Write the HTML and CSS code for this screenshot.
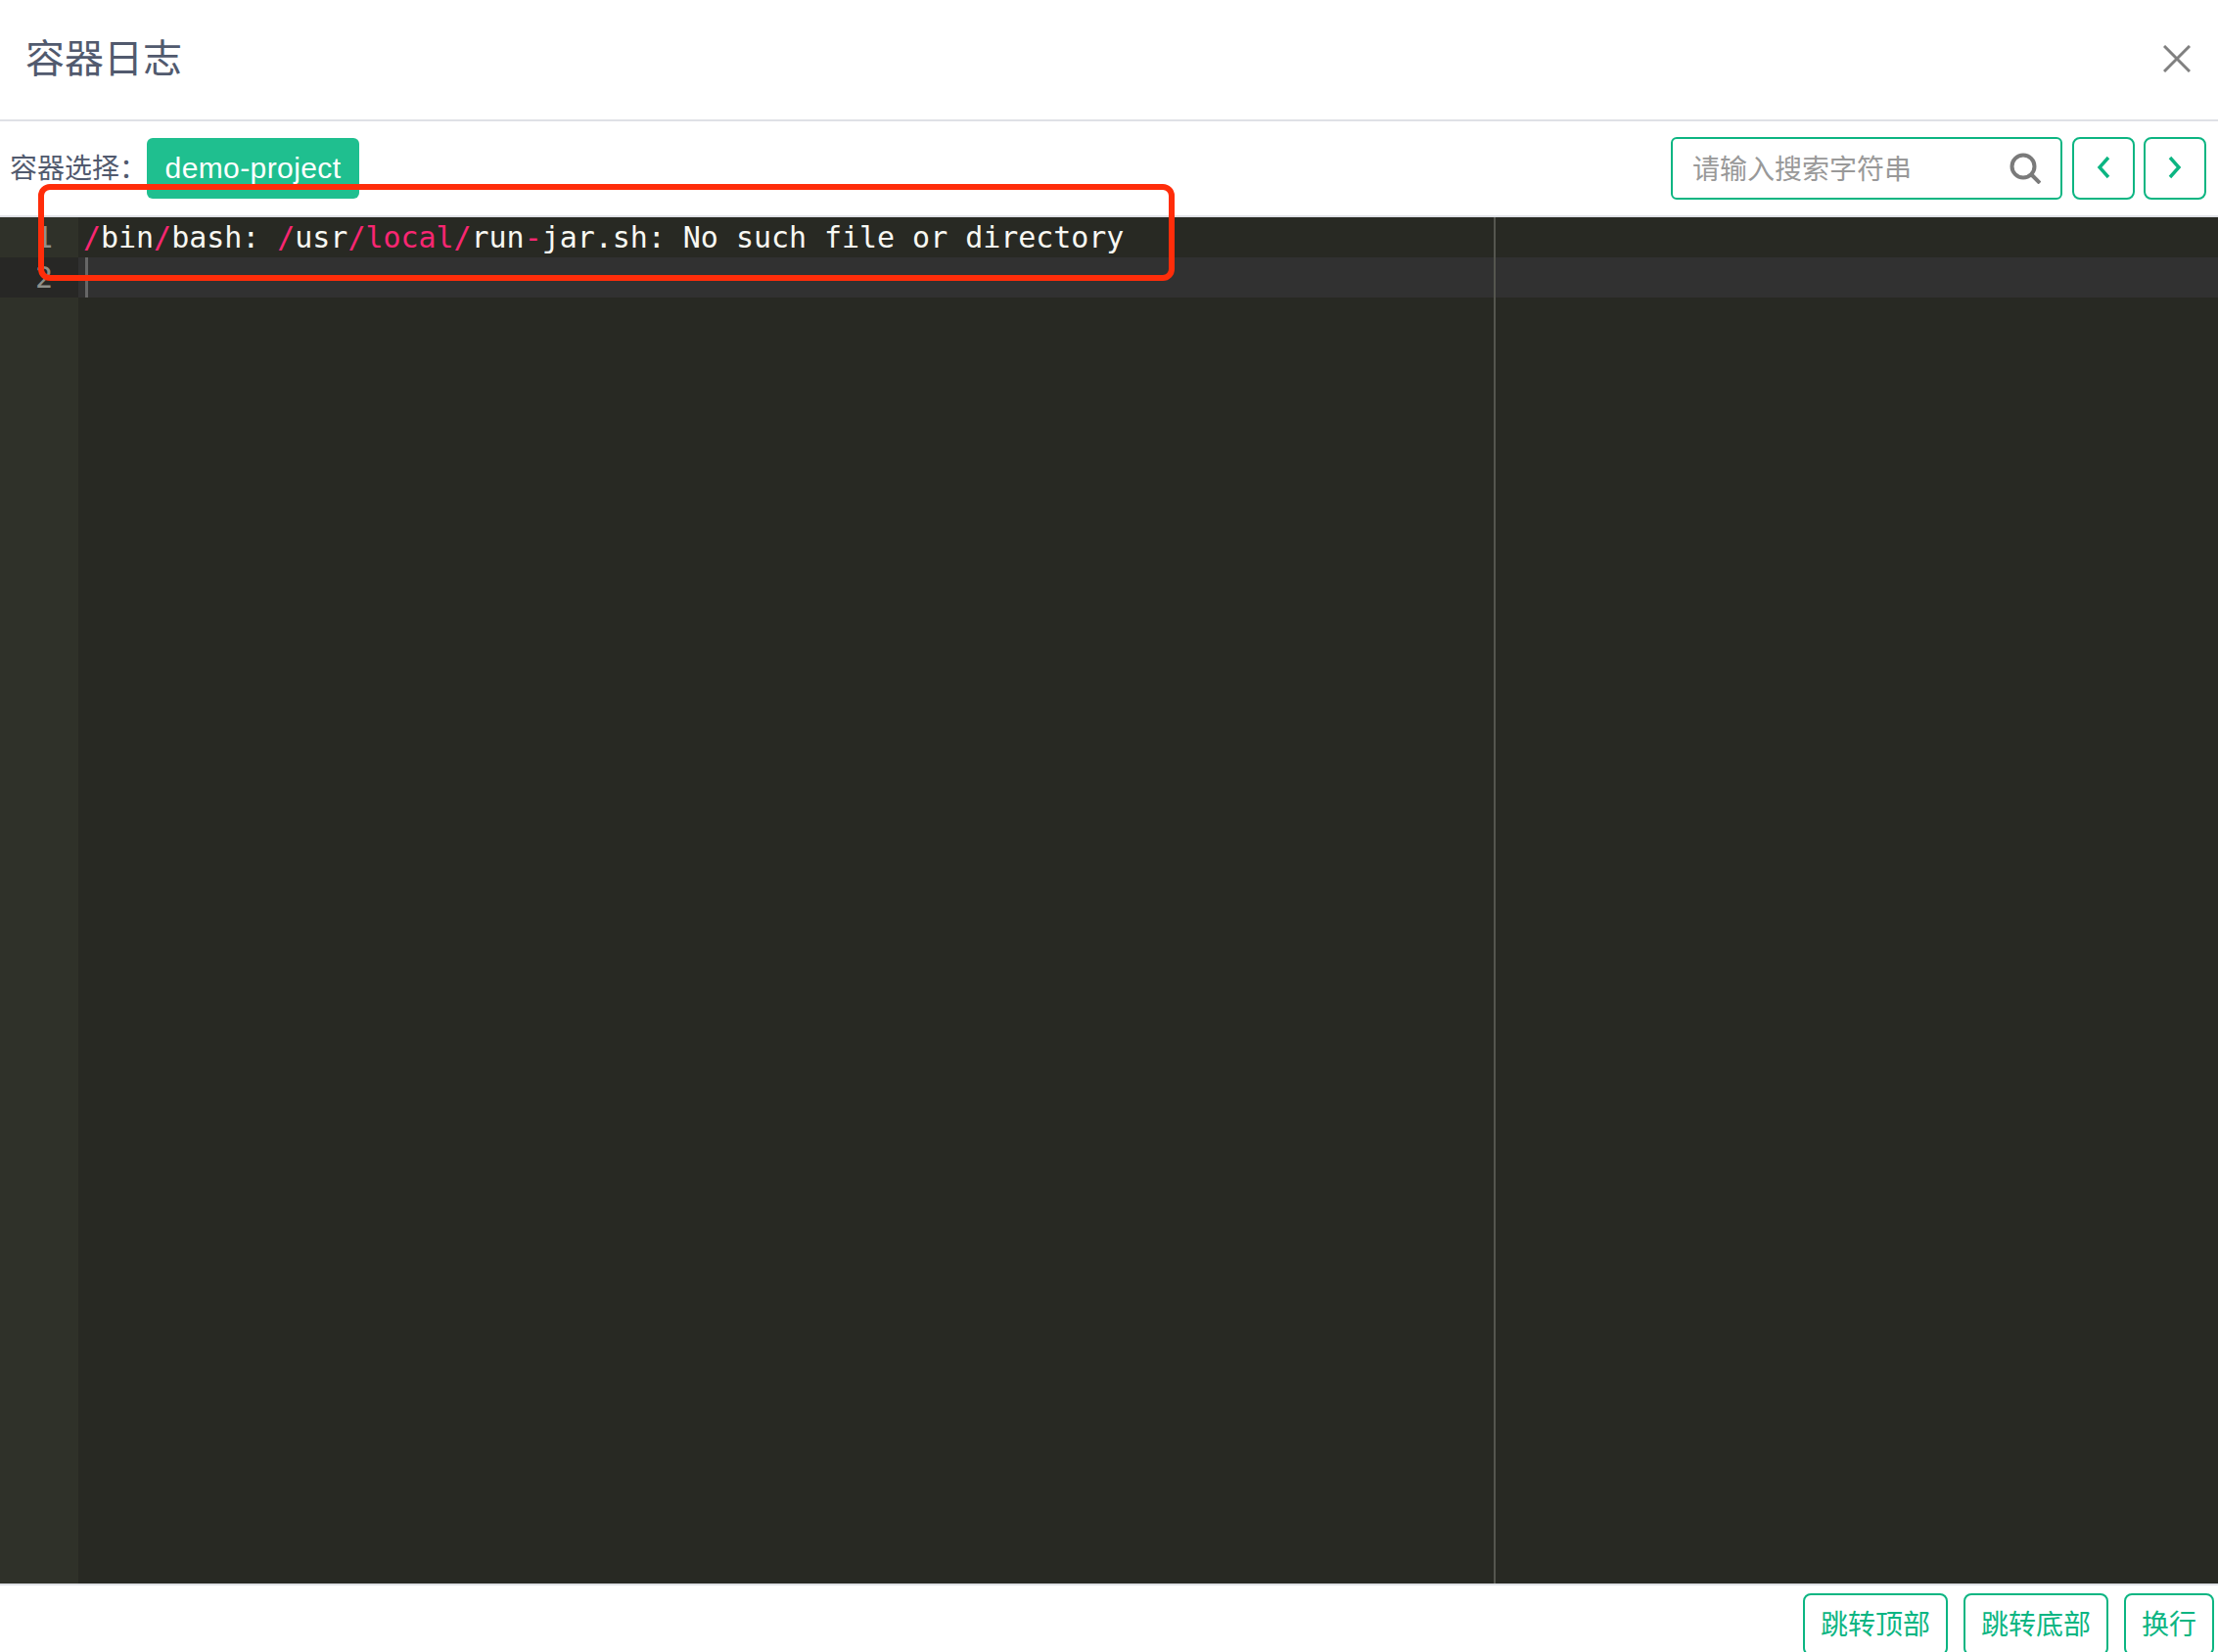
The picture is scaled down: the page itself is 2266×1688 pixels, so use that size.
FILE: index.html
```html
<!DOCTYPE html>
<html lang="zh">
<head>
<meta charset="utf-8">
<title>容器日志</title>
<link rel="stylesheet" href="styles.css">
</head>
<body>
<div class="modal">
  <header class="head">
    <h1 class="title">容器日志</h1>
    <svg class="close" width="28" height="28" viewBox="0 0 28 28"><path d="M1 1L27 27M27 1L1 27" fill="none" stroke="#808080" stroke-width="3"/></svg>
  </header>
  <div class="toolbar">
    <span class="label">容器选择：</span>
    <span class="tag">demo-project</span>
    <div class="tools">
      <div class="search">
        <span class="placeholder">请输入搜索字符串</span>
        <svg width="32" height="32" viewBox="0 0 32 32"><circle cx="14" cy="14" r="11.5" fill="none" stroke="#7a7a7a" stroke-width="4"/><path d="M22.5 22.5L31 31" fill="none" stroke="#7a7a7a" stroke-width="4"/></svg>
      </div>
      <button class="btn icon"><svg width="14" height="24" viewBox="0 0 14 24"><path d="M12 2L3 12L12 22" fill="none" stroke="#0cb582" stroke-width="3.4"/></svg></button>
      <button class="btn icon"><svg width="14" height="24" viewBox="0 0 14 24"><path d="M2 2L11 12L2 22" fill="none" stroke="#0cb582" stroke-width="3.4"/></svg></button>
    </div>
  </div>
  <main class="editor">
    <div class="gutter">
      <div class="num">1</div>
      <div class="num active-num">2</div>
    </div>
    <div class="code">
      <div class="line"><i>/</i>bin<i>/</i>bash: <i>/</i>usr<i>/local/</i>run<i>-</i>jar.sh: No such file or directory</div>
      <div class="line active-line"><span class="cursor"></span></div>
    </div>
    <div class="margin"></div>
  </main>
  <footer class="foot">
    <button class="btn">跳转顶部</button>
    <button class="btn">跳转底部</button>
    <button class="btn">换行</button>
  </footer>
  <div class="callout"></div>
</div>
</body>
</html>
```
FILE: styles.css
```css
* { box-sizing: border-box; }
html, body { margin: 0; padding: 0; background: #fff; }
.modal {
  position: relative;
  width: 2266px;
  height: 1688px;
  overflow: hidden;
  display: flex;
  flex-direction: column;
  font-family: "Liberation Sans", "Noto Sans CJK SC", sans-serif;
  color: #515a6e;
}
.head {
  height: 124px;
  flex: none;
  border-bottom: 2px solid #dfe1e6;
  display: flex;
  align-items: center;
  justify-content: space-between;
  padding: 0 28px 0 26px;
}
.title {
  margin: 0 0 2px;
  font-size: 40px;
  font-weight: 400;
  line-height: 56px;
}
.close { margin-bottom: 3px; }
.toolbar {
  height: 98px;
  flex: none;
  border-bottom: 2px solid #dfe1e6;
  display: flex;
  align-items: flex-start;
  padding: 16px 12px 0 10px;
}
.label {
  font-size: 28px;
  line-height: 62px;
  width: 140px;
  flex: none;
  white-space: nowrap;
  padding-top: 2px;
}
.tag {
  width: 217px;
  height: 62px;
  margin-top: 1px;
  background: #1fbf8f;
  color: #fff;
  border-radius: 6px;
  font-size: 30px;
  line-height: 62px;
  text-align: center;
  letter-spacing: 0.4px;
}
.tools { margin-left: auto; display: flex; gap: 9px; }
.search {
  width: 400px;
  height: 64px;
  margin-right: 1px;
  border: 2px solid #0cb582;
  border-radius: 6px;
  display: flex;
  align-items: center;
  justify-content: space-between;
  padding: 0 20px 2px 20px;
}
.search svg { margin-top: 2px; }
.placeholder { font-size: 28px; color: #999; }
.btn {
  height: 64px;
  padding: 0 16px 4px;
  background: #fff;
  border: 2px solid #0cb582;
  border-radius: 8px;
  color: #0cb582;
  font: 28px "Liberation Sans", "Noto Sans CJK SC", sans-serif;
  display: flex;
  align-items: center;
  justify-content: center;
}
.btn.icon { width: 64px; padding: 0 0 2px; }
.editor {
  position: relative;
  flex: 1;
  display: flex;
  background: #282923;
  font-family: "DejaVu Sans Mono", monospace;
  font-size: 30px;
  line-height: 41px;
}
.gutter { width: 80px; flex: none; background: #2f3129; color: #8f908a; }
.num { height: 41px; padding-right: 26px; text-align: right; }
.active-num { background: #272725; }
.code { flex: 1; }
.line { height: 41px; padding-left: 5px; color: #f8f8f2; white-space: pre; letter-spacing: -0.04px; }
.line i { font-style: normal; color: #f92672; }
.active-line { background: #313131; }
.cursor { display: block; width: 3px; height: 41px; margin-left: 2px; background: #666; }
.margin { position: absolute; left: 1526px; top: 0; bottom: 0; width: 2px; background: #55564f; }
.foot {
  flex: none;
  height: 70px;
  border-top: 2px solid #dfe1e6;
  display: flex;
  justify-content: flex-end;
  gap: 16px;
  padding: 8px 4px 0 0;
}
.callout {
  position: absolute;
  left: 39px;
  top: 188px;
  width: 1161px;
  height: 99px;
  border: 6px solid #ff2d0a;
  border-radius: 12px;
}
```
